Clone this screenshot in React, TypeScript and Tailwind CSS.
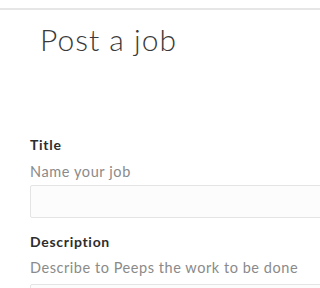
export default function App() {
  return (
    <div className="h-screen bg-white overflow-hidden" style={{ fontFamily: "Lato, 'Noto Sans', sans-serif" }}>
      <div className="h-[10px] border-b-2 border-[#e6e6e6]" />
      <h1 className="pl-[40px] pt-[9px] text-[30px] leading-[40px] font-light text-[#3a3a3a] tracking-[1px]">
        Post a job
      </h1>
      <form className="pl-[30px] pt-[78px] flex flex-col w-[400px]">
        <label className="text-[14px] leading-[16px] font-bold text-[#2d2d2d] tracking-[0.7px]">Title</label>
        <p className="mt-[11px] text-[14.5px] leading-[16px] text-[#8a8a8a] tracking-[0.6px]">Name your job</p>
        <div className="mt-[5px] h-[33px] border border-[#e4e4e4] rounded-[2px] bg-[#fcfcfc]" />
        <label className="mt-[16px] text-[14px] leading-[16px] font-bold text-[#2d2d2d] tracking-[0.7px]">Description</label>
        <p className="mt-[10px] text-[14.5px] leading-[16px] text-[#8a8a8a] tracking-[0.55px] whitespace-nowrap">
          Describe to Peeps the work to be done
        </p>
        <div className="mt-[8px] h-[80px] border border-[#e4e4e4] rounded-[2px] bg-[#fcfcfc]" />
      </form>
    </div>
  );
}
